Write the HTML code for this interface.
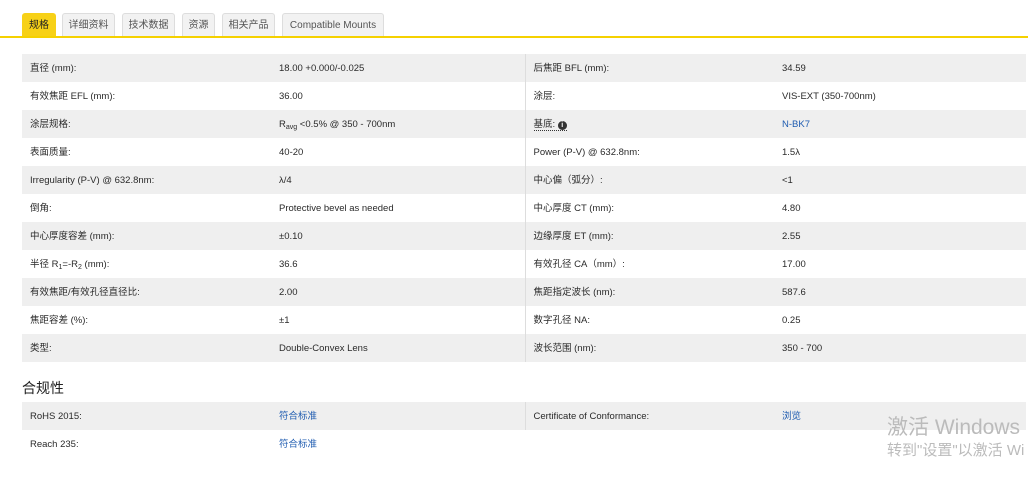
<!DOCTYPE html>
<html><head><meta charset="utf-8"><style>
body{margin:0;width:1028px;height:486px;background:#fff;font-family:"Liberation Sans","Noto Sans CJK SC",sans-serif;color:#333;overflow:hidden;position:relative}
.tabs{position:absolute;top:12px;left:0;width:1028px;height:24px;border-bottom:2px solid #f5d100}
.tab{position:absolute;top:1px;height:23px;background:#f2f2f2;border:1px solid #ddd;border-bottom:none;border-radius:3px 3px 0 0;font-size:10px;line-height:24px;text-align:center;color:#555;box-sizing:border-box}
.tab.on{background:#f7d117;border-color:#f7d117;color:#222}
table{position:absolute;left:22px;width:1004px;border-collapse:collapse;table-layout:fixed;font-size:9.5px;color:#2a2a2a}
td{height:28px;box-sizing:border-box;padding:2px 0 0 8px;vertical-align:middle;line-height:12px;white-space:nowrap}
tr{height:28px}
tr:nth-child(odd) td{background:#efefef}
td.c1{width:249px}td.c2{width:254px}td.c3{width:249px;border-left:1px solid #ddd}
.b{color:#1e5bb0}
h3{position:absolute;left:22px;top:378px;margin:0;font-size:14px;font-weight:normal;color:#222}
sub{font-size:7px;line-height:0;vertical-align:-2px}
.wm{position:absolute;left:887px;color:#bbb;white-space:nowrap}
</style></head><body>
<div class="tabs">
<div class="tab on" style="left:22px;width:34px">规格</div>
<div class="tab" style="left:62px;width:53px">详细资料</div>
<div class="tab" style="left:122px;width:53px">技术数据</div>
<div class="tab" style="left:182px;width:33px">资源</div>
<div class="tab" style="left:222px;width:53px">相关产品</div>
<div class="tab" style="left:282px;width:102px">Compatible Mounts</div>
</div>
<table style="top:54px">
<tr><td class="c1">直径 (mm):</td><td class="c2">18.00 +0.000/-0.025</td><td class="c3">后焦距 BFL (mm):</td><td>34.59</td></tr>
<tr><td class="c1">有效焦距 EFL (mm):</td><td class="c2">36.00</td><td class="c3">涂层:</td><td>VIS-EXT (350-700nm)</td></tr>
<tr><td class="c1">涂层规格:</td><td class="c2">R<sub>avg</sub> &lt;0.5% @ 350 - 700nm</td><td class="c3"><span style="border-bottom:1px dotted #333">基底: <b style="display:inline-block;width:9px;height:9px;border-radius:50%;background:#333;color:#fff;font-size:7px;line-height:9px;text-align:center">i</b></span></td><td class="b">N-BK7</td></tr>
<tr><td class="c1">表面质量:</td><td class="c2">40-20</td><td class="c3">Power (P-V) @ 632.8nm:</td><td>1.5λ</td></tr>
<tr><td class="c1">Irregularity (P-V) @ 632.8nm:</td><td class="c2">λ/4</td><td class="c3">中心偏（弧分）:</td><td>&lt;1</td></tr>
<tr><td class="c1">倒角:</td><td class="c2">Protective bevel as needed</td><td class="c3">中心厚度 CT (mm):</td><td>4.80</td></tr>
<tr><td class="c1">中心厚度容差 (mm):</td><td class="c2">±0.10</td><td class="c3">边缘厚度 ET (mm):</td><td>2.55</td></tr>
<tr><td class="c1">半径 R<sub>1</sub>=-R<sub>2</sub> (mm):</td><td class="c2">36.6</td><td class="c3">有效孔径 CA（mm）:</td><td>17.00</td></tr>
<tr><td class="c1">有效焦距/有效孔径直径比:</td><td class="c2">2.00</td><td class="c3">焦距指定波长 (nm):</td><td>587.6</td></tr>
<tr><td class="c1">焦距容差 (%):</td><td class="c2">±1</td><td class="c3">数字孔径 NA:</td><td>0.25</td></tr>
<tr><td class="c1">类型:</td><td class="c2">Double-Convex Lens</td><td class="c3">波长范围 (nm):</td><td>350 - 700</td></tr>
</table>
<h3>合规性</h3>
<table style="top:402px">
<tr><td class="c1">RoHS 2015:</td><td class="c2 b">符合标准</td><td class="c3">Certificate of Conformance:</td><td class="b">浏览</td></tr>
<tr><td class="c1">Reach 235:</td><td class="c2 b">符合标准</td><td class="c3" style="border-left:none"></td><td></td></tr>
</table>
<div class="wm" style="top:411px;font-size:21px">激活 Windows</div>
<div class="wm" style="top:439px;font-size:15px">转到"设置"以激活 Wi</div>
</body></html>
